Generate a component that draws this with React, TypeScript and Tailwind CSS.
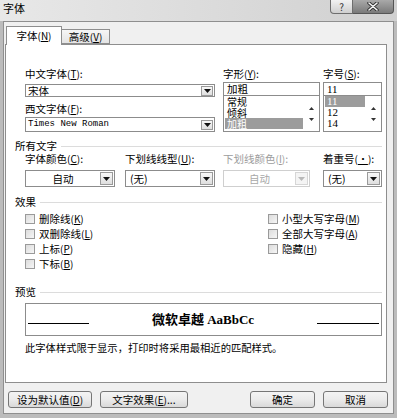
import React from "react";

function Mn({ k }: { k: string }) {
  return (
    <span className="text-[10px]">
      (<span className="underline">{k}</span>)
    </span>
  );
}

function Label({ text, k, disabled }: { text: string; k: string; disabled?: boolean }) {
  return (
    <div className={disabled ? "h-[12px] leading-[12px] text-[10.5px] whitespace-nowrap text-[#9c9c9c]" : "h-[12px] leading-[12px] text-[10.5px] whitespace-nowrap"}>
      {text}
      <Mn k={k} />:
    </div>
  );
}

function DropBtn({ disabled, tall }: { disabled?: boolean; tall?: boolean }) {
  return (
    <div
      className={
        (tall ? "w-[13px] h-[13px] " : "w-[12px] h-[10px] ") +
        (disabled
          ? "border border-[#d6d6d6] bg-[#f4f4f4] flex items-center justify-center shrink-0"
          : "border border-[#9a9a9a] bg-gradient-to-b from-[#f8f8f8] to-[#dedede] flex items-center justify-center shrink-0")
      }
    >
      <svg width="7" height="4" viewBox="0 0 7 4">
        <path d="M0 0h7L3.5 4z" fill={disabled ? "#b8b8b8" : "#111"} />
      </svg>
    </div>
  );
}

function Select({ value, w, center, disabled }: { value: string; w: string; center?: boolean; disabled?: boolean }) {
  return (
    <div className={w + (disabled ? " h-[17px] border border-[#cfcfcf]" : " h-[17px] border border-[#8c8c8c]") + " bg-white flex items-center pr-[1px]"}>
      <div
        className={
          (center ? "flex-1 text-center" : "flex-1 pl-[4px]") +
          (disabled ? " text-[10.5px] leading-[12px] text-[#a8a8a8]" : " text-[10.5px] leading-[12px]")
        }
      >
        {value}
      </div>
      <DropBtn disabled={disabled} tall />
    </div>
  );
}

function Header({ text }: { text: string }) {
  return (
    <div className="flex items-center gap-[4px] h-[12px]">
      <span className="text-[10.5px] leading-[12px] whitespace-nowrap">{text}</span>
      <div className="flex-1 h-px bg-[#dcdcdc]" />
    </div>
  );
}

function Check({ text, k }: { text: string; k: string }) {
  return (
    <div className="h-[15px] flex items-center gap-[4px]">
      <div className="w-[10px] h-[10px] border border-[#9a9a9a] bg-gradient-to-br from-[#dcdcdc] to-[#f6f6f6]" />
      <span className="text-[10.5px] leading-[12px] whitespace-nowrap">
        {text}
        <Mn k={k} />
      </span>
    </div>
  );
}

function ListBox({ items, sel, w, serif }: { items: string[]; sel: number; w: string; serif?: boolean }) {
  return (
    <div className={w + " h-[36px] border border-[#8c8c8c] border-t-0 bg-white flex"}>
      <div className="flex-1 flex flex-col pl-[1px]">
        {items.map((it, i) => (
          <div
            key={it}
            className={
              (i === sel ? "bg-[#9c9c9c] text-white " : "") +
              (serif
                ? "h-[11px] leading-[11px] pl-[2px] text-[11px] font-['Liberation_Serif',serif]"
                : "h-[11px] leading-[11px] pl-[2px] text-[10px]")
            }
          >
            {it}
          </div>
        ))}
      </div>
      <div className="w-[16px] flex flex-col items-center justify-center gap-[8px] bg-white">
        <svg width="5" height="3" viewBox="0 0 5 3">
          <path d="M0 3h5L2.5 0z" fill="#333" />
        </svg>
        <svg width="5" height="3" viewBox="0 0 5 3">
          <path d="M0 0h5L2.5 3z" fill="#333" />
        </svg>
      </div>
    </div>
  );
}

function Button({ children, w }: { children: React.ReactNode; w: string }) {
  return (
    <div className={w + " h-[17px] border border-[#767676] rounded-[3px] bg-gradient-to-b from-[#f4f4f4] via-[#ebebeb] to-[#d9d9d9] flex items-center justify-center text-[10.5px] leading-[12px] whitespace-nowrap"}>
      {children}
    </div>
  );
}

export default function App() {
  return (
    <div className="w-[397px] h-[418px] overflow-hidden bg-[#bcbcbc] flex flex-col font-['Noto_Sans_CJK_SC',sans-serif] text-black">
      {/* title bar */}
      <div className="h-[21px] shrink-0 flex justify-between bg-gradient-to-r from-[#e8e8e8] via-[#dcdcdc] to-[#d0d0d0]">
        <div className="pl-[3px] pt-[2px] text-[11px] leading-[12px]">字体</div>
        <div className="flex mr-[3px] h-[14px]">
          <div className="w-[23px] h-[14px] border border-[#6e6e6e] border-t-0 rounded-bl-[4px] bg-gradient-to-b from-[#f2f2f2] to-[#cfcfcf] flex items-center justify-center text-[10px] leading-[10px] text-[#333]">
            ?
          </div>
          <div className="w-[41px] h-[14px] border border-[#555] border-t-0 border-l-0 rounded-br-[4px] bg-gradient-to-b from-[#a9a9a9] to-[#7a7a7a] flex items-center justify-center">
            <svg width="12" height="9" viewBox="0 0 12 9">
              <path d="M2 1l8 7M10 1L2 8" stroke="#333" strokeWidth="3.4" strokeLinecap="round" />
              <path d="M2 1l8 7M10 1L2 8" stroke="#f4f4f4" strokeWidth="1.6" strokeLinecap="round" />
            </svg>
          </div>
        </div>
      </div>

      {/* body */}
      <div className="ml-[3px] mr-[3px] h-[393px] shrink-0 bg-[#f0f0f0] border border-[#8f8f8f] flex flex-col">
        {/* tabs */}
        <div className="mt-[4px] h-[18px] flex items-end pl-[2px] relative z-10">
          <div className="w-[56px] h-[19px] mb-[-1px] bg-white border border-b-0 border-[#8e8e8e] flex items-center justify-center text-[10.5px] leading-[12px]">
            字体<Mn k="N" />
          </div>
          <div className="w-[48px] h-[15px] border border-l-0 border-[#8e8e8e] bg-gradient-to-b from-[#f6f6f6] to-[#e4e4e4] flex items-center justify-center text-[10.5px] leading-[12px]">
            高级<Mn k="V" />
          </div>
        </div>

        {/* panel */}
        <div className="ml-[1px] w-[382px] h-[339px] border border-[#8e8e8e] bg-white pt-[23px] pl-[9px] pr-[4px] flex flex-col">
          {/* font rows */}
          <div className="flex ml-[10px]">
            <div className="w-[190px] flex flex-col">
              <Label text="中文字体" k="T" />
              <div className="mt-[4px] h-[13px] border border-[#8c8c8c] bg-white flex items-center pr-[1px]">
                <div className="flex-1 pl-[2px] text-[10.5px] leading-[11px]">宋体</div>
                <DropBtn />
              </div>
              <div className="mt-[6px]">
                <Label text="西文字体" k="F" />
              </div>
              <div className="mt-[2px] h-[15px] border border-[#8c8c8c] bg-white flex items-center pr-[1px]">
                <div className="flex-1 pl-[2px] text-[9px] leading-[11px] font-['Liberation_Mono',monospace]">Times New Roman</div>
                <DropBtn />
              </div>
            </div>
            <div className="ml-[8px] w-[97px] flex flex-col">
              <Label text="字形" k="Y" />
              <div className="mt-[2px] h-[14px] border border-[#8c8c8c] bg-white pl-[3px] text-[10.5px] leading-[12px]">加粗</div>
              <ListBox items={["常规", "倾斜", "加粗"]} sel={2} w="w-[97px]" />
            </div>
            <div className="ml-[3px] w-[59px] flex flex-col">
              <Label text="字号" k="S" />
              <div className="mt-[2px] h-[14px] border border-[#8c8c8c] bg-white pl-[3px] text-[11px] leading-[12px] font-['Liberation_Serif',serif]">11</div>
              <ListBox items={["11", "12", "14"]} sel={0} w="w-[59px]" serif />
            </div>
          </div>

          {/* all text */}
          <div className="mt-[8px]">
            <Header text="所有文字" />
          </div>
          <div className="mt-[1px] ml-[10px] flex">
            <div className="w-[90px] flex flex-col">
              <Label text="字体颜色" k="C" />
              <div className="mt-[5px]">
                <Select value="自动" w="w-[90px]" center />
              </div>
            </div>
            <div className="ml-[10px] w-[90px] flex flex-col">
              <Label text="下划线线型" k="U" />
              <div className="mt-[5px]">
                <Select value="(无)" w="w-[90px]" />
              </div>
            </div>
            <div className="ml-[8px] w-[87px] flex flex-col">
              <Label text="下划线颜色" k="I" disabled />
              <div className="mt-[5px]">
                <Select value="自动" w="w-[87px]" center disabled />
              </div>
            </div>
            <div className="ml-[13px] w-[59px] flex flex-col">
              <div className="h-[12px] leading-[12px] text-[10.5px] whitespace-nowrap">
                着重号<span className="text-[10px]">(<span className="underline">·</span>)</span>:
              </div>
              <div className="mt-[5px]">
                <Select value="(无)" w="w-[59px]" />
              </div>
            </div>
          </div>

          {/* effects */}
          <div className="mt-[9px]">
            <Header text="效果" />
          </div>
          <div className="mt-[3px] ml-[10px] flex">
            <div className="w-[243px] flex flex-col">
              <Check text="删除线" k="K" />
              <Check text="双删除线" k="L" />
              <Check text="上标" k="P" />
              <Check text="下标" k="B" />
            </div>
            <div className="flex flex-col">
              <Check text="小型大写字母" k="M" />
              <Check text="全部大写字母" k="A" />
              <Check text="隐藏" k="H" />
            </div>
          </div>

          {/* preview */}
          <div className="mt-[15px]">
            <Header text="预览" />
          </div>
          <div className="mt-[5px] ml-[10px] h-[33px] border border-[#8c8c8c] bg-white flex items-center px-[2px]">
            <div className="w-[61px] h-px bg-black self-end mb-[11px]" />
            <div className="flex-1 text-center text-[13px] leading-[16px] font-bold font-['Liberation_Serif','Noto_Sans_CJK_SC',serif]">
              微软卓越 AaBbCc
            </div>
            <div className="w-[62px] h-px bg-black self-end mb-[11px]" />
          </div>
          <div className="mt-[6px] ml-[10px] text-[10.3px] leading-[12px] whitespace-nowrap">
            此字体样式限于显示，打印时将采用最相近的匹配样式。
          </div>
        </div>

        {/* buttons */}
        <div className="mt-[8px] flex pl-[4px] pr-[5px]">
          <Button w="w-[84px]">
            设为默认值<Mn k="D" />
          </Button>
          <div className="ml-[8px]">
            <Button w="w-[88px]">
              文字效果<Mn k="E" />...
            </Button>
          </div>
          <div className="flex-1" />
          <Button w="w-[65px]">确定</Button>
          <div className="ml-[8px]">
            <Button w="w-[65px]">取消</Button>
          </div>
        </div>
      </div>
    </div>
  );
}
